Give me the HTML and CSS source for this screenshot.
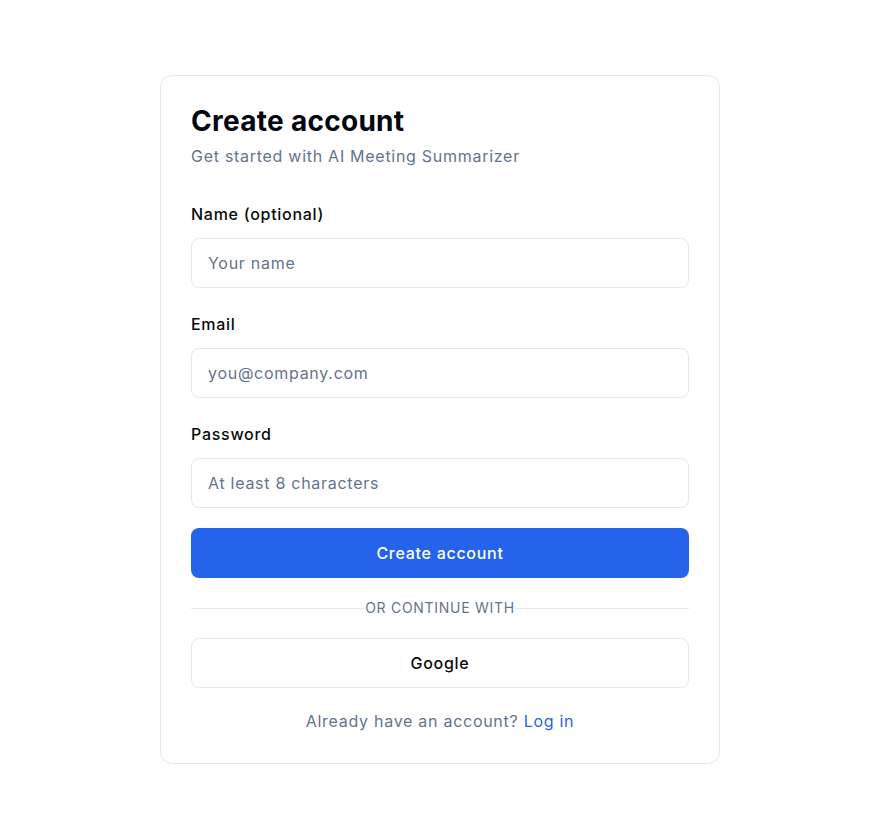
FILE: index.html
```html
<!DOCTYPE html>
<html lang="en">
<head>
<meta charset="utf-8">
<title>Create account</title>
<link rel="stylesheet" href="styles.css">
</head>
<body>
<main class="page">
  <section class="card">
    <header class="card-header">
      <h1 class="title">Create account</h1>
      <p class="subtitle">Get started with AI Meeting Summarizer</p>
    </header>
    <form class="form">
      <div class="fields">
        <div class="field">
          <label class="label" for="name">Name (optional)</label>
          <input class="input" id="name" type="text" placeholder="Your name">
        </div>
        <div class="field">
          <label class="label" for="email">Email</label>
          <input class="input" id="email" type="email" placeholder="you@company.com">
        </div>
        <div class="field">
          <label class="label" for="password">Password</label>
          <input class="input" id="password" type="password" placeholder="At least 8 characters">
        </div>
      </div>
      <button class="btn btn-primary" type="button">Create account</button>
      <div class="divider"><span class="divider-line"></span><span class="divider-text">OR CONTINUE WITH</span><span class="divider-line"></span></div>
      <button class="btn btn-outline" type="button">Google</button>
      <p class="footer">Already have an account? <a class="link" href="#">Log in</a></p>
    </form>
  </section>
</main>
</body>
</html>
```

FILE: styles.css
```css
* { box-sizing: border-box; }
html, body { margin: 0; padding: 0; background: #ffffff; }
body {
  font-family: Inter, "Noto Sans", "Liberation Sans", sans-serif;
  letter-spacing: 0.045em;
  color: #0a0a0a;
}
.page {
  display: flex;
  justify-content: center;
  padding: 75px 9px 0 0;
}
.card {
  width: 560px;
  border: 1px solid #e2e8f0;
  border-radius: 12px;
  padding: 30px;
  background: #fff;
}
.card-header { margin-bottom: 34px; }
.title {
  margin: 0;
  font-size: 28px;
  line-height: 30px;
  font-weight: 700;
  letter-spacing: 0.01em;
  color: #030712;
}
.subtitle {
  margin: 8px 0 0;
  font-size: 16px;
  line-height: 24px;
  color: #64748b;
}
.form { display: flex; flex-direction: column; gap: 20px; }
.fields { display: flex; flex-direction: column; gap: 24px; }
.field { display: flex; flex-direction: column; }
.label {
  font-size: 16px;
  line-height: 24px;
  font-weight: 500;
  color: #0a0a0a;
  margin-bottom: 12px;
}
.input {
  height: 50px;
  border: 1px solid #e2e8f0;
  border-radius: 8px;
  padding: 0 16px;
  font-family: inherit;
  letter-spacing: inherit;
  font-size: 16px;
  color: #0a0a0a;
  background: #fff;
  outline: none;
}
.input::placeholder { color: #64748b; opacity: 1; }
.btn {
  height: 50px;
  border-radius: 8px;
  font-family: inherit;
  letter-spacing: inherit;
  font-size: 16px;
  cursor: pointer;
}
.btn-primary {
  background: #2563eb;
  color: #fff;
  border: none;
  font-weight: 500;
}
.btn-outline {
  background: #fff;
  color: #0a0a0a;
  border: 1px solid #e2e8f0;
  font-weight: 500;
}
.divider {
  display: flex;
  align-items: center;
  height: 20px;
}
.divider-line { flex: 1; height: 1px; background: #e2e8f0; }
.divider-text {
  font-size: 14px;
  line-height: 20px;
  color: #64748b;
}
.footer {
  margin: 1px 0 0;
  text-align: center;
  font-size: 16px;
  line-height: 24px;
  color: #64748b;
}
.link { color: #2563eb; text-decoration: none; }
```
